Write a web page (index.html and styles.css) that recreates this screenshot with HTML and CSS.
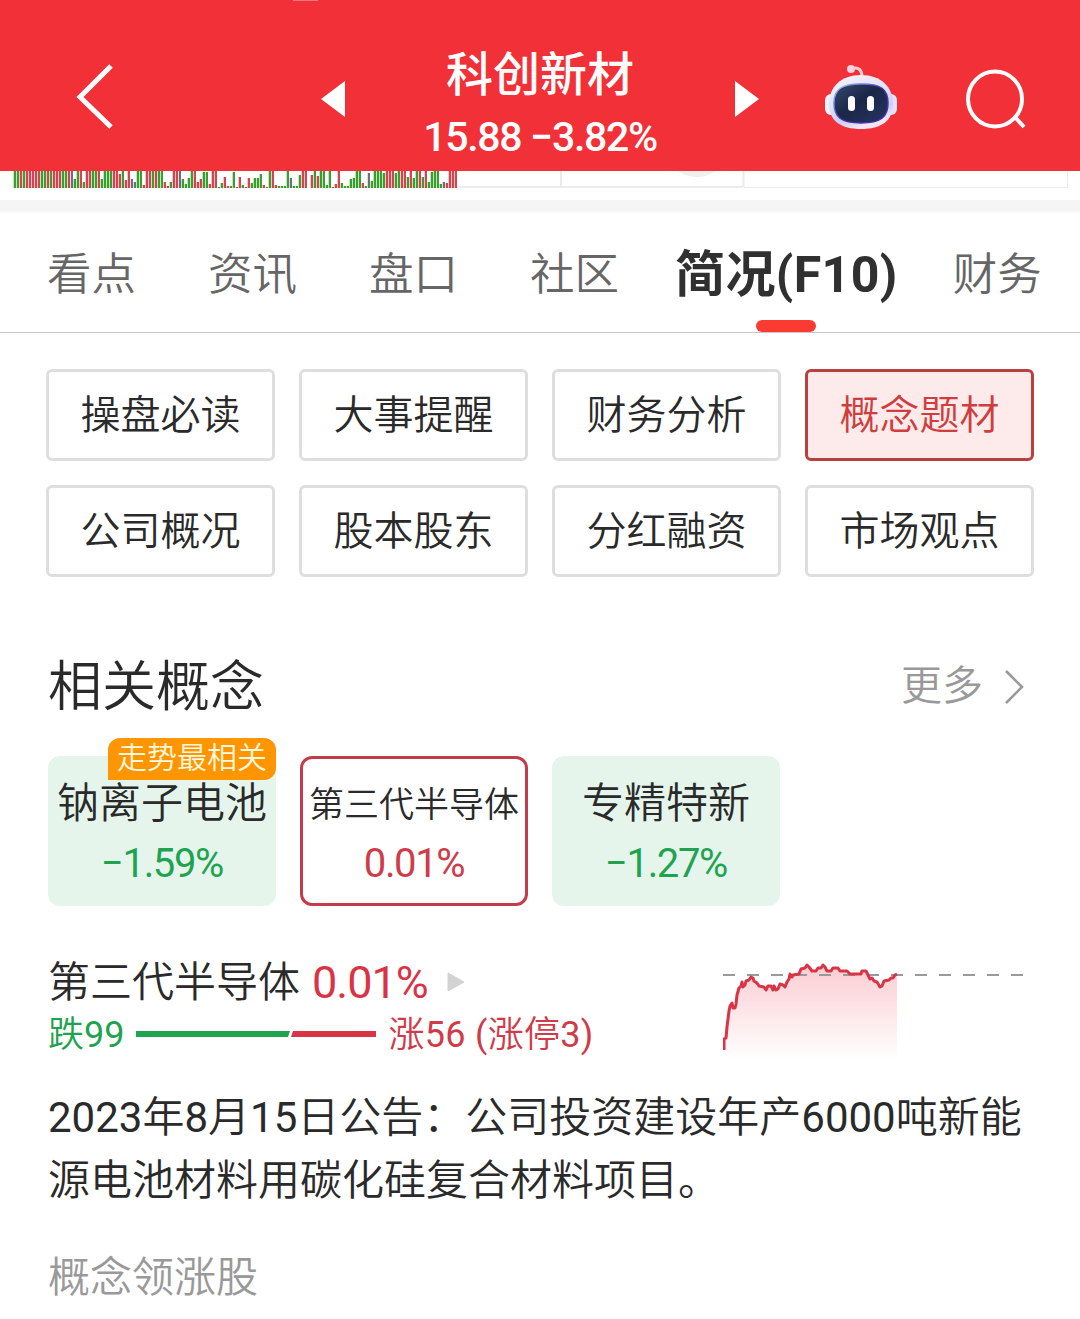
FILE: index.html
```
<!DOCTYPE html>
<html lang="zh-CN">
<head>
  <meta charset="UTF-8" />
  <meta name="viewport" content="width=device-width, initial-scale=1.0" />
  <title>科创新材</title>
  <link rel="stylesheet" href="styles.css">
</head>
<body>
  <header class="header">
    <span class="notch"></span>
    <svg class="back" width="40" height="68" viewBox="0 0 40 68"><path d="M36 3 L5 34 L36 64" fill="none" stroke="#fff" stroke-width="5" /></svg>
    <svg class="prev" width="24" height="36" viewBox="0 0 24 36"><path d="M24 0 V36 L0 18 Z" fill="#fff" /></svg>
    <div class="stock">
      <h1>科创新材</h1>
      <p class="quote">15.88 −3.82%</p>
    </div>
    <svg class="next" width="24" height="36" viewBox="0 0 24 36"><path d="M0 0 V36 L24 18 Z" fill="#fff" /></svg>
    <svg class="robot" width="74" height="70" viewBox="0 0 74 70">
      <defs>
        <linearGradient id="shell" x1="0" y1="0" x2="0.4" y2="1">
          <stop offset="0" stop-color="#fdf0fa" />
          <stop offset="0.5" stop-color="#dce5fa" />
          <stop offset="0.8" stop-color="#c9cdf5" />
          <stop offset="1" stop-color="#f5e6f6" />
        </linearGradient>
        <linearGradient id="visor" x1="0" y1="0" x2="1" y2="1">
          <stop offset="0" stop-color="#36486f" />
          <stop offset="0.45" stop-color="#1b2748" />
          <stop offset="1" stop-color="#263462" />
        </linearGradient>
        <linearGradient id="rim" x1="0" y1="0" x2="1" y2="1">
          <stop offset="0" stop-color="#8fd4f2" />
          <stop offset="0.5" stop-color="#4d30a8" />
          <stop offset="1" stop-color="#4035a8" />
        </linearGradient>
      </defs>
      <path d="M28 7 C34 4 38 8 38 15" fill="none" stroke="#fbc9d3" stroke-width="3" />
      <circle cx="27" cy="7" r="4" fill="#fbd3dc" />
      <rect x="1" y="32" width="12" height="21" rx="6" fill="#f1f0fb" />
      <rect x="61" y="32" width="12" height="21" rx="6" fill="#e6e1f8" />
      <path d="M37 13 C57 13 69 25 69 42 C69 59 57 67 37 67 C17 67 5 59 5 42 C5 25 17 13 37 13 Z" fill="url(#shell)" />
      <path d="M37 22 C57 22 64 27 64 41 C64 55 57 61 37 61 C17 61 10 55 10 41 C10 27 18 22 37 22 Z" fill="url(#visor)" stroke="url(#rim)" stroke-width="1.5" />
      <rect x="24" y="34" width="7" height="15" rx="3.5" fill="#fff" />
      <rect x="43" y="34" width="7" height="15" rx="3.5" fill="#fff" />
    </svg>
    <svg class="search" width="62" height="62" viewBox="0 0 62 62">
      <ellipse cx="30" cy="31" rx="27" ry="27.5" fill="none" stroke="#fff" stroke-width="4" />
      <path d="M49 48 L59 59" stroke="#fff" stroke-width="4" />
    </svg>
  </header>

  <svg class="volume" width="1080" height="29" viewBox="0 0 1080 29">
    <path d="M457 16 H743" stroke="#ededed" stroke-width="2" />
    <path d="M561 0 V16 M743.5 0 V16" stroke="#ebebeb" stroke-width="2" />
    <path d="M744 16.5 H1067.5 V0" fill="none" stroke="#ebebeb" />
    <path d="M678 0 Q697 12 716 0 Z" fill="#f0eeee" />
    <g id="bars"></g>
  </svg>

  <nav class="tabs">
    <a>看点</a>
    <a>资讯</a>
    <a>盘口</a>
    <a>社区</a>
    <a class="active">简况(F10)</a>
    <a>财务</a>
  </nav>

  <div class="menu">
    <button>操盘必读</button>
    <button>大事提醒</button>
    <button>财务分析</button>
    <button class="active">概念题材</button>
    <button>公司概况</button>
    <button>股本股东</button>
    <button>分红融资</button>
    <button>市场观点</button>
  </div>

  <section class="concepts">
    <div class="section-head">
      <h2>相关概念</h2>
      <a class="more">更多
        <svg width="20" height="34" viewBox="0 0 20 34"><path d="M2 1 L18 17 L2 33" fill="none" stroke="#999" stroke-width="2.5" /></svg>
      </a>
    </div>

    <div class="cards">
      <div class="card down">
        <span class="badge">走势最相关</span>
        <div class="name">钠离子电池</div>
        <div class="rate">−1.59%</div>
      </div>
      <div class="card selected">
        <div class="name small">第三代半导体</div>
        <div class="rate">0.01%</div>
      </div>
      <div class="card down">
        <div class="name">专精特新</div>
        <div class="rate">−1.27%</div>
      </div>
    </div>

    <div class="detail">
      <div class="info">
        <div class="info-title">
          <span class="info-name">第三代半导体</span>
          <span class="info-rate">0.01%</span>
          <svg width="18" height="20" viewBox="0 0 18 20"><path d="M1 1 V19 L17 10 Z" fill="#d3d3d3" stroke="#d3d3d3" stroke-linejoin="round" /></svg>
        </div>
        <div class="breadth">
          <div class="fall">跌<span class="num">99</span></div>
          <svg width="240" height="6" viewBox="0 0 240 6">
            <path d="M0 0 H154 L152 6 H0 Z" fill="#1fa350" />
            <path d="M157 0 H240 V6 H155 Z" fill="#d93445" />
          </svg>
          <div class="rise">涨<span class="num">56 (</span>涨停<span class="num">3)</span></div>
        </div>
      </div>
      <svg class="trend" width="302" height="110" viewBox="0 0 302 110">
        <defs>
          <linearGradient id="area" x1="0" y1="0" x2="0" y2="1">
            <stop offset="0" stop-color="#fbcdd2" />
            <stop offset="1" stop-color="#fff" />
          </linearGradient>
        </defs>
        <path id="trend-area" fill="url(#area)" />
        <path d="M0 25 H302" stroke="#999" stroke-width="2" stroke-dasharray="12 12" />
        <path id="trend-line" fill="none" stroke="#d93445" stroke-width="3" stroke-linejoin="round" />
      </svg>
    </div>

    <p class="news"><span class="num">2023</span>年<span class="num">8</span>月<span class="num">15</span>日公告：公司投资建设年产<span class="num">6000</span>吨新能源电池材料用碳化硅复合材料项目。</p>
    <h3>概念领涨股</h3>
  </section>

  <script>
    // colour + height of each volume bar, "-" is an empty slot
    const volume = "g17 g17 r17 g17 r17 r17 r17 r17 r17 g17 g17 r17 g17 r17 r17 r17 g17 g17 r17 d17 g9 g17 r17 g6 r17 r17 g17 g17 r17 g9 g17 g17 g17 r17 r17 r14 g17 r8 r17 d9 d6 g17 g17 r3 r17 r17 g17 r17 g17 g17 r6 r2 g6 r17 r17 d17 g9 g4 g10 g17 r17 r6 r9 g16 g16 r4 r17 r17 g1 g5 r11 r2 g2 g16 r1 r11 g3 r1 r10 g5 g10 g10 g14 r3 g1 g17 r17 r3 g2 g2 g2 g17 d10 g2 g2 g13 r17 r17 - r13 g17 r12 g17 g17 g3 g17 r1 r4 r17 g5 g2 g2 g9 g10 g17 g17 r5 g2 d15 g7 g17 g17 g17 g15 r17 r17 r17 g15 g17 r17 r17 g11 r17 g10 g17 r17 g11 r17 g6 g16 g17 g17 g4 d6 r5 r17 r17 r17";
    const colors = { g: "#3f9a35", r: "#cf4550", d: "#6b7078" };
    const tints = { g: "#b9edb0", r: "#fbc4c6", d: "#dcdee2" };
    document.getElementById("bars").innerHTML = volume.split(" ").map((bar, i) => {
      const h = Number(bar.slice(1));
      const x = 14 + i * 3;
      return h ? `<rect x="${x - 1}" y="${17 - h}" width="1" height="${h}" fill="${tints[bar[0]]}" />
        <rect x="${x}" y="${17 - h}" width="2" height="${h}" fill="${colors[bar[0]]}" />` : "";
    }).join("");

    const points = "1,100 1,89 3,88 4,77 6,61 7,56 9,53 10,58 12,58 13,54 14,45 16,38 18,36 19,32 20,37 22,35 23,31 26,30 28,27 30,28 31,31 34,33 36,36 41,37 43,40 45,36 48,36 50,40 51,36 53,40 55,39 57,34 60,35 62,37 64,32 66,29 67,24 69,27 70,25 76,24 78,19 82,18 84,15 86,17 89,21 93,21 95,18 98,18 100,15 102,17 104,21 108,21 110,18 115,18 117,21 124,21 127,24 138,24 139,21 143,21 145,25 147,29 149,28 151,31 154,32 157,37 159,36 161,31 166,30 168,28 170,28 172,25 174,24";
    document.getElementById("trend-line").setAttribute("d", "M" + points);
    document.getElementById("trend-area").setAttribute("d", "M" + points + " V110 H1 Z");
  </script>
</body>
</html>
```
FILE: styles.css
```
* {
  box-sizing: border-box;
}

body {
  margin: 0;
  width: 1080px;
  height: 1319px;
  overflow: hidden;
  background: #fff;
  color: #2a2a2a;
  font-family: Roboto, 'Noto Sans CJK SC', sans-serif;
  font-weight: 350;
}

h1, h2, h3, p {
  margin: 0;
  font-weight: 350;
}

svg {
  display: block;
  flex: none;
}

.num {
  font-weight: 400;
}

.header {
  position: relative;
  display: flex;
  align-items: flex-start;
  height: 171px;
  padding-left: 75px;
  background: #f23038;
  color: #fff;
}

.notch {
  position: absolute;
  left: 293px;
  top: 0;
  width: 25px;
  height: 1px;
  background: #f6767b;
}

.back {
  margin-top: 63px;
}

.prev {
  margin: 81px 0 0 206px;
}

.stock {
  width: 390px;
  padding-top: 45px;
  text-align: center;
}

.stock h1 {
  font-size: 47px;
  line-height: 60px;
  font-weight: 500;
}

.quote {
  font-size: 41px;
  line-height: 64px;
  font-weight: 500;
  letter-spacing: -1.3px;
}

.next {
  margin-top: 81px;
}

.robot {
  margin: 62px 0 0 65px;
}

.search {
  margin: 68px 0 0 67px;
}

.tabs {
  display: flex;
  height: 133px;
  padding-left: 47px;
  border-top: 12px solid #f5f5f5;
  border-bottom: 1px solid #c8c8c8;
  font-size: 44.5px;
  line-height: 126px;
  color: #666;
}

.tabs a {
  margin-right: 72px;
  white-space: nowrap;
}

.tabs a:nth-child(4) {
  margin-right: 56px;
}

.tabs .active {
  position: relative;
  height: 120px;
  margin-right: 55px;
  font-size: 50px;
  font-weight: 700;
  letter-spacing: 0.4px;
  color: #303030;
}

.tabs .active::after {
  content: "";
  position: absolute;
  left: 50%;
  bottom: 0;
  width: 60px;
  height: 12px;
  margin-left: -30px;
  border-radius: 6px;
  background: #fb3b32;
}

.menu {
  display: grid;
  grid-template-columns: repeat(4, 229px);
  gap: 24px;
  padding: 36px 46px 0;
}

.menu button {
  height: 92px;
  padding: 0 0 6px;
  border: 3px solid #dedede;
  border-radius: 6px;
  background: #fff;
  color: #2a2a2a;
  font-family: inherit;
  font-size: 40px;
  font-weight: inherit;
}

.menu .active {
  border-color: #b8403f;
  background: #fdeaeb;
  color: #cf3d3d;
}

.concepts {
  padding: 0 48px;
}

.section-head {
  display: flex;
  justify-content: space-between;
  height: 179px;
  padding-top: 67px;
}

.section-head h2 {
  padding-top: 4px;
  font-size: 54px;
  line-height: 80px;
}

.more {
  display: flex;
  gap: 21px;
  align-items: center;
  height: 80px;
  margin: -2px 8px 0 0;
  font-size: 41px;
  color: #999;
}

.more svg {
  margin-top: 9px;
}

.cards {
  display: flex;
  gap: 24px;
}

.card {
  position: relative;
  width: 228px;
  height: 150px;
  padding-top: 21px;
  border-radius: 12px;
  text-align: center;
}

.card.down {
  background: #e6f5ec;
}

.card.selected {
  padding-top: 20px;
  border: 3px solid #c23c4b;
}

.name {
  font-size: 42px;
  line-height: 54px;
  white-space: nowrap;
}

.name.small {
  margin: 0 -4px;
  font-size: 35px;
}

.rate {
  margin-top: 3px;
  font-size: 40px;
  line-height: 60px;
  font-weight: 400;
  letter-spacing: -1.4px;
  color: #d03b4a;
}

.selected .rate {
  margin-top: 1px;
}

.down .rate {
  color: #1fa350;
}

.badge {
  position: absolute;
  right: 0;
  top: -18px;
  width: 168px;
  height: 42px;
  border-radius: 12px 12px 12px 0;
  background: #ff9500;
  color: #fff8dc;
  font-size: 30px;
  line-height: 40px;
}

.detail {
  display: flex;
  justify-content: space-between;
  height: 174px;
  padding-top: 44px;
}

.info-title {
  display: flex;
  align-items: center;
  height: 60px;
  font-size: 42px;
}

.info-name {
  margin-top: -4px;
}

.info-rate {
  margin: 4px 19px 0 12px;
  font-size: 45px;
  font-weight: 400;
  letter-spacing: -1px;
  color: #d93445;
}

.info-title svg {
  margin-top: 4px;
}

.breadth {
  display: flex;
  align-items: center;
  gap: 12px;
  height: 48px;
  font-size: 36px;
  white-space: nowrap;
}

.breadth div {
  margin-top: -6px;
}

.fall {
  color: #1fa350;
}

.rise {
  letter-spacing: 0.3px;
  color: #d03b4a;
}

.trend {
  margin: 0 7px 0 0;
}

.news {
  margin-right: -20px;
  padding-top: 6px;
  font-size: 42px;
  line-height: 63px;
}

.concepts h3 {
  margin-top: 34px;
  font-size: 42px;
  line-height: 63px;
  color: #999;
}
```
